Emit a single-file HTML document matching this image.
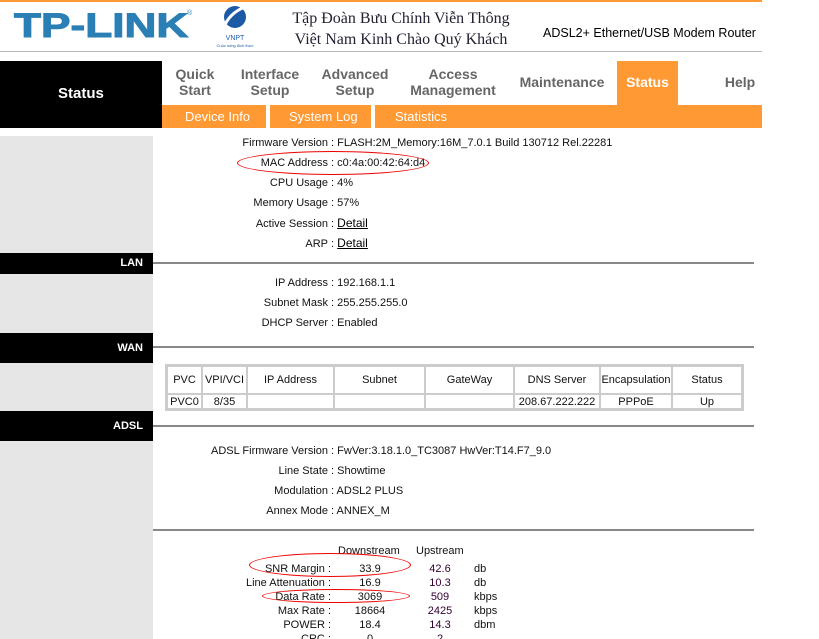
<!DOCTYPE html>
<html><head><meta charset="utf-8"><style>
*{margin:0;padding:0;box-sizing:border-box}
html,body{width:819px;height:639px;overflow:hidden}
body{background:#fff;font-family:"Liberation Sans",Arial,sans-serif;font-size:11px;color:#111;position:relative}
.a{position:absolute}
.nav{position:absolute;top:66px;font-weight:bold;font-size:14px;color:#666;text-align:center;line-height:16px}
.sub{position:absolute;top:109px;color:#fff;font-size:13px}
.bar{position:absolute;left:0;width:153px;background:#000;color:#fff;font-weight:bold;font-size:11px;text-align:right;padding-right:10px}
.hl{position:absolute;left:153px;width:601px;height:2px;background:#888}
.row{position:absolute;left:148px;width:600px;white-space:nowrap}
.row b{font-weight:normal;display:inline-block;width:180px;text-align:right}
.row u{color:#000;font-size:12px}
table{border-collapse:separate;border-spacing:0;position:absolute;left:165px;top:364px;width:579px;border:2px solid #ccc;table-layout:fixed}
td{border:1px solid #ccc;text-align:center;font-size:11px;overflow:hidden;white-space:nowrap}
.st{position:absolute;white-space:nowrap}
.ell{position:absolute;border:1px solid #e00;border-radius:50%}
</style></head><body>
<div class="a" style="left:0;top:0;width:762px;height:2px;background:#f93"></div>
<div class="a" style="left:0;top:51px;width:762px;height:1px;background:#bbb"></div>
<div class="a" style="left:14px;top:7px;font-family:'Liberation Sans',sans-serif;font-weight:bold;font-size:34px;color:#2a7fb5;letter-spacing:0px;transform:scaleX(1.3);transform-origin:left;-webkit-text-stroke:1px #2a7fb5">TP-LINK</div>
<div class="a" style="left:187px;top:10px;font-size:7px;color:#2a7fb5">®</div>
<svg class="a" style="left:215px;top:3px" width="40" height="46" viewBox="0 0 40 46"><ellipse cx="20" cy="14" rx="11" ry="11" fill="#1c5aa6"/><path d="M8 26 Q14 10 30 4" stroke="#fff" stroke-width="3" fill="none"/><text x="20" y="37" font-size="7" text-anchor="middle" fill="#1c5aa6" font-family="Liberation Sans">VNPT</text><text x="20" y="44" font-size="4" text-anchor="middle" fill="#1c5aa6">Cuộc sống đích thực</text></svg>
<div class="a" style="left:292px;top:8px;font-family:'Liberation Serif',serif;font-size:16px;color:#223;line-height:21px;text-align:center;width:218px">Tập Đoàn Bưu Chính Viễn Thông<br>Việt Nam Kinh Chào Quý Khách</div>
<div class="a" style="left:543px;top:26px;font-size:12.5px;color:#000">ADSL2+ Ethernet/USB Modem Router</div>
<div class="a" style="left:0;top:61px;width:162px;height:67px;background:#000"></div>
<div class="a" style="left:58px;top:85px;color:#fff;font-weight:bold;font-size:15px">Status</div>
<div class="nav" style="left:170px;width:50px">Quick<br>Start</div>
<div class="nav" style="left:236px;width:68px">Interface<br>Setup</div>
<div class="nav" style="left:318px;width:74px">Advanced<br>Setup</div>
<div class="nav" style="left:406px;width:94px">Access<br>Management</div>
<div class="nav" style="left:518px;width:88px;top:74px">Maintenance</div>
<div class="a" style="left:617px;top:61px;width:61px;height:44px;background:#f93"></div>
<div class="nav" style="left:617px;width:61px;top:74px;color:#fff">Status</div>
<div class="nav" style="left:720px;width:40px;top:74px">Help</div>
<div class="a" style="left:162px;top:105px;width:600px;height:23px;background:#f93"></div>
<div class="a" style="left:266px;top:105px;width:4px;height:23px;background:#fff"></div>
<div class="a" style="left:371px;top:105px;width:4px;height:23px;background:#fff"></div>
<div class="sub" style="left:185px">Device Info</div>
<div class="sub" style="left:289px">System Log</div>
<div class="sub" style="left:395px">Statistics</div>
<div class="a" style="left:0;top:136px;width:153px;height:503px;background:#e6e6e6"></div>
<div class="bar" style="top:253px;height:21px;line-height:21px">LAN</div>
<div class="bar" style="top:333px;height:30px;line-height:30px">WAN</div>
<div class="bar" style="top:411px;height:30px;line-height:30px">ADSL</div>
<div class="hl" style="top:262px"></div><div class="hl" style="top:346px"></div><div class="hl" style="top:425px"></div><div class="hl" style="top:529px"></div>
<div class="row" style="top:137px"><b>Firmware Version</b> : FLASH:2M_Memory:16M_7.0.1 Build 130712 Rel.22281</div>
<div class="row" style="top:157px"><b>MAC Address</b> : c0:4a:00:42:64:d4</div>
<div class="row" style="top:177px"><b>CPU Usage</b> : 4%</div>
<div class="row" style="top:197px"><b>Memory Usage</b> : 57%</div>
<div class="row" style="top:216px"><b>Active Session</b> : <u>Detail</u></div>
<div class="row" style="top:236px"><b>ARP</b> : <u>Detail</u></div>
<div class="ell" style="left:237px;top:151px;width:192px;height:24px"></div>
<div class="row" style="top:277px"><b>IP Address</b> : 192.168.1.1</div>
<div class="row" style="top:297px"><b>Subnet Mask</b> : 255.255.255.0</div>
<div class="row" style="top:317px"><b>DHCP Server</b> : Enabled</div>
<table><colgroup><col style="width:35px"><col style="width:45px"><col style="width:87px"><col style="width:91px"><col style="width:89px"><col style="width:86px"><col style="width:72px"><col></colgroup>
<tr style="height:28px"><td>PVC</td><td>VPI/VCI</td><td>IP Address</td><td>Subnet</td><td>GateWay</td><td>DNS Server</td><td>Encapsulation</td><td>Status</td></tr>
<tr style="height:15px"><td>PVC0</td><td>8/35</td><td></td><td></td><td></td><td>208.67.222.222</td><td>PPPoE</td><td>Up</td></tr></table>
<div class="row" style="top:445px"><b>ADSL Firmware Version</b> : FwVer:3.18.1.0_TC3087 HwVer:T14.F7_9.0</div>
<div class="row" style="top:465px"><b>Line State</b> : Showtime</div>
<div class="row" style="top:485px"><b>Modulation</b> : ADSL2 PLUS</div>
<div class="row" style="top:505px"><b>Annex Mode</b> : ANNEX_M</div>
<div class="st" style="left:338px;top:545px">Downstream</div><div class="st" style="left:416px;top:545px">Upstream</div>
<div class="st" style="left:200px;top:562px;width:131px;text-align:right;line-height:14px">SNR Margin :<br>Line Attenuation :<br>Data Rate :<br>Max Rate :<br>POWER :<br>CRC :</div>
<div class="st" style="left:340px;top:562px;width:60px;text-align:center;line-height:14px">33.9<br>16.9<br>3069<br>18664<br>18.4<br>0</div>
<div class="st" style="left:410px;top:562px;width:60px;text-align:center;line-height:14px;color:#303">42.6<br>10.3<br>509<br>2425<br>14.3<br>2</div>
<div class="st" style="left:474px;top:562px;line-height:14px">db<br>db<br>kbps<br>kbps<br>dbm</div>
<div class="ell" style="left:249px;top:553px;width:162px;height:24px"></div>
<div class="ell" style="left:262px;top:589px;width:148px;height:14px"></div>
</body></html>
